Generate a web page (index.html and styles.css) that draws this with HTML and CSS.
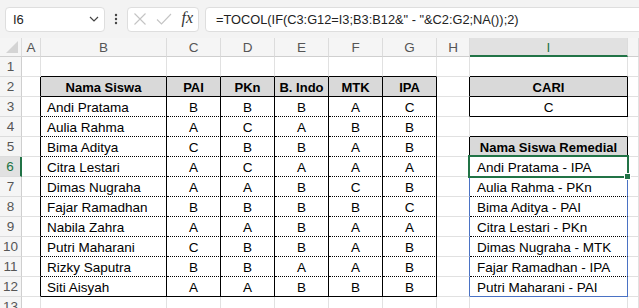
FILE: index.html
```html
<!DOCTYPE html>
<html lang="id">
<head>
    <meta charset="UTF-8">
    <meta name="viewport" content="width=device-width, initial-scale=1.0">
    <title>Nama Siswa Remedial</title>
    <link rel="stylesheet" href="styles.css">
</head>
<body>
    <div class="toolbar">
        <div class="namebox">
            <span>I6</span>
            <svg class="chev" width="10" height="6" viewBox="0 0 10 6"><path d="M1 1l4 4 4-4" fill="none" stroke="#444" stroke-width="1.2"/></svg>
        </div>
        <svg class="more" width="4" height="12" viewBox="0 0 4 12"><circle cx="2" cy="2" r="1.2" fill="#444"/><circle cx="2" cy="6" r="1.2" fill="#444"/><circle cx="2" cy="10" r="1.2" fill="#444"/></svg>
        <div class="fxbox">
            <svg width="14" height="14" viewBox="0 0 14 14"><path d="M1.5 1.5l11 11M12.5 1.5l-11 11" stroke="#c4c4c4" stroke-width="1.1" fill="none"/></svg>
            <svg width="16" height="14" viewBox="0 0 16 14"><path d="M1 7.5l4.5 4.5L15 2" stroke="#c4c4c4" stroke-width="1.1" fill="none"/></svg>
            <span class="fx">fx</span>
        </div>
        <div class="formula">=TOCOL(IF(C3:G12=I3;B3:B12&amp;" - "&amp;C2:G2;NA());2)</div>
    </div>

    <div class="sheet">
        <div class="row hdr">
            <div class="corner"><span></span></div>
            <div class="ch">A</div><div class="ch">B</div><div class="ch">C</div><div class="ch">D</div>
            <div class="ch">E</div><div class="ch">F</div><div class="ch">G</div><div class="ch">H</div>
            <div class="ch active">I</div><div class="ch"></div>
        </div>
        <div class="row">
            <div class="rh">1</div><div class="c"></div>
            <div class="c top"></div><div class="c top"></div><div class="c top"></div><div class="c top"></div><div class="c top"></div><div class="c top"></div>
            <div class="c"></div><div class="c top"></div><div class="c"></div>
        </div>
        <div class="row">
            <div class="rh">2</div><div class="c edge"></div>
            <div class="c th">Nama Siswa</div><div class="c th">PAI</div><div class="c th">PKn</div><div class="c th">B. Indo</div><div class="c th">MTK</div><div class="c th">IPA</div>
            <div class="c edge"></div><div class="c th">CARI</div><div class="c"></div>
        </div>
        <div class="row">
            <div class="rh">3</div><div class="c edge"></div>
            <div class="c t name">Andi Pratama</div><div class="c t">B</div><div class="c t">B</div><div class="c t">B</div><div class="c t">A</div><div class="c t">C</div>
            <div class="c edge"></div><div class="c box">C</div><div class="c"></div>
        </div>
        <div class="row">
            <div class="rh">4</div><div class="c edge"></div>
            <div class="c t name">Aulia Rahma</div><div class="c t">A</div><div class="c t">C</div><div class="c t">A</div><div class="c t">B</div><div class="c t">B</div>
            <div class="c"></div><div class="c top"></div><div class="c"></div>
        </div>
        <div class="row">
            <div class="rh">5</div><div class="c edge"></div>
            <div class="c t name">Bima Aditya</div><div class="c t">C</div><div class="c t">B</div><div class="c t">B</div><div class="c t">A</div><div class="c t">B</div>
            <div class="c edge"></div><div class="c th">Nama Siswa Remedial</div><div class="c"></div>
        </div>
        <div class="row">
            <div class="rh active">6</div><div class="c edge"></div>
            <div class="c t name">Citra Lestari</div><div class="c t">A</div><div class="c t">C</div><div class="c t">A</div><div class="c t">A</div><div class="c t">A</div>
            <div class="c spill-l"></div><div class="c spill sel">Andi Pratama - IPA</div><div class="c"></div>
        </div>
        <div class="row">
            <div class="rh">7</div><div class="c edge"></div>
            <div class="c t name">Dimas Nugraha</div><div class="c t">A</div><div class="c t">A</div><div class="c t">B</div><div class="c t">C</div><div class="c t">B</div>
            <div class="c spill-l"></div><div class="c spill">Aulia Rahma - PKn</div><div class="c"></div>
        </div>
        <div class="row">
            <div class="rh">8</div><div class="c edge"></div>
            <div class="c t name">Fajar Ramadhan</div><div class="c t">B</div><div class="c t">B</div><div class="c t">B</div><div class="c t">B</div><div class="c t">C</div>
            <div class="c spill-l"></div><div class="c spill">Bima Aditya - PAI</div><div class="c"></div>
        </div>
        <div class="row">
            <div class="rh">9</div><div class="c edge"></div>
            <div class="c t name">Nabila Zahra</div><div class="c t">A</div><div class="c t">A</div><div class="c t">B</div><div class="c t">A</div><div class="c t">A</div>
            <div class="c spill-l"></div><div class="c spill">Citra Lestari - PKn</div><div class="c"></div>
        </div>
        <div class="row">
            <div class="rh">10</div><div class="c edge"></div>
            <div class="c t name">Putri Maharani</div><div class="c t">C</div><div class="c t">B</div><div class="c t">B</div><div class="c t">A</div><div class="c t">B</div>
            <div class="c spill-l"></div><div class="c spill">Dimas Nugraha - MTK</div><div class="c"></div>
        </div>
        <div class="row">
            <div class="rh">11</div><div class="c edge"></div>
            <div class="c t name">Rizky Saputra</div><div class="c t">B</div><div class="c t">B</div><div class="c t">A</div><div class="c t">A</div><div class="c t">B</div>
            <div class="c spill-l"></div><div class="c spill">Fajar Ramadhan - IPA</div><div class="c"></div>
        </div>
        <div class="row">
            <div class="rh">12</div><div class="c edge"></div>
            <div class="c t last name">Siti Aisyah</div><div class="c t last">A</div><div class="c t last">A</div><div class="c t last">B</div><div class="c t last">B</div><div class="c t last">B</div>
            <div class="c spill-l"></div><div class="c spill end">Putri Maharani - PAI</div><div class="c"></div>
        </div>
        <div class="row">
            <div class="rh">13</div><div class="c"></div>
            <div class="c"></div><div class="c"></div><div class="c"></div><div class="c"></div><div class="c"></div><div class="c"></div>
            <div class="c"></div><div class="c"></div><div class="c"></div>
        </div>
    </div>
</body>
</html>
```

FILE: styles.css
```css
body {
    margin: 0;
    width: 639px;
    height: 308px;
    overflow: hidden;
    background: #fff;
    font-family: 'Liberation Sans', Arial, sans-serif;
    color: #000;
}

/* formula bar */
.toolbar {
    display: flex;
    align-items: center;
    height: 38px;
    padding-left: 5px;
    box-sizing: border-box;
    background: #f3f3f3;
}

.namebox, .fxbox, .formula {
    height: 25px;
    box-sizing: border-box;
    background: #fff;
    border: 1px solid #dedede;
    border-radius: 4px;
    display: flex;
    align-items: center;
}

.namebox {
    width: 100px;
    padding: 0 5px 0 7px;
    justify-content: space-between;
    font-size: 13px;
    color: #222;
}

.more {
    margin: 0 9px 0 9px;
}

.fxbox {
    width: 72px;
    padding: 0 5px 0 5px;
    justify-content: space-between;
}

.fx {
    font-family: 'Liberation Serif', serif;
    font-style: italic;
    font-size: 16px;
    color: #333;
    padding-bottom: 2px;
}

.formula {
    flex: 1;
    margin-left: 6px;
    margin-right: -6px;
    padding-left: 10px;
    font-size: 12.8px;
    color: #222;
    white-space: nowrap;
}

/* grid */
.row {
    display: grid;
    grid-template-columns: 22px 19px 126px 54px 54px 54px 54px 54px 33px 158px 1fr;
    height: 20px;
}

.row > div {
    box-sizing: border-box;
    height: 20px;
    overflow: hidden;
    white-space: nowrap;
}

.hdr, .hdr > div {
    height: 19px !important;
}

.hdr > div {
    background: #f5f5f5;
    border-right: 1px solid #dcdcdc;
    border-bottom: 1px solid #cfcfcf;
    font-size: 13.5px;
    color: #555;
    text-align: center;
    line-height: 19px;
}

.hdr .ch.active {
    background: #e1e1e1;
    border-bottom: 2px solid #217346;
    color: #217346;
}

.corner {
    position: relative;
}

.corner span {
    position: absolute;
    right: 3px;
    bottom: 3px;
    width: 0;
    height: 0;
    border-left: 12px solid transparent;
    border-bottom: 12px solid #d4d4d4;
}

.rh {
    background: #f5f5f5;
    border-right: 1px solid #cfcfcf;
    border-bottom: 1px solid #dcdcdc;
    font-size: 13.5px;
    color: #555;
    text-align: center;
    line-height: 20px;
}

.rh.active {
    background: #e1e1e1;
    border-right: 2px solid #217346;
    color: #217346;
}

.c {
    border-right: 1px solid #e1e1e1;
    border-bottom: 1px solid #e1e1e1;
    font-size: 13.5px;
    line-height: 16px;
    padding-top: 3px;
    text-align: center;
}

.c.top {
    border-bottom-color: #000;
}

.c.edge {
    border-right-color: #000;
}

.c.th {
    background: #d9d9d9;
    font-weight: bold;
    font-size: 13px;
    border-right-color: #000;
    border-bottom-color: #000;
}

.c.t {
    border-right-color: #000;
    border-bottom: 1px dotted #000;
}

.c.t.last {
    border-bottom: 1px solid #000;
}

.c.name, .c.spill {
    text-align: left;
    padding-left: 6px;
}

.c.box {
    border-right-color: #000;
    border-bottom-color: #000;
}

.c.spill-l {
    border-right-color: #4a72c4;
}

.c.spill {
    padding-left: 7px;
    border-right-color: #4a72c4;
    border-bottom: 1px dotted #000;
}

.c.spill.end {
    border-bottom: 1px solid #4a72c4;
}

.c.sel {
    position: relative;
    overflow: visible;
}

.c.sel::after {
    content: '';
    position: absolute;
    left: -2px;
    top: -2px;
    right: -2px;
    bottom: -2px;
    border: 2px solid #217346;
}

.c.sel::before {
    content: '';
    position: absolute;
    right: -4px;
    bottom: -4px;
    width: 5px;
    height: 5px;
    background: #217346;
    border: 1px solid #fff;
    z-index: 2;
}
```
